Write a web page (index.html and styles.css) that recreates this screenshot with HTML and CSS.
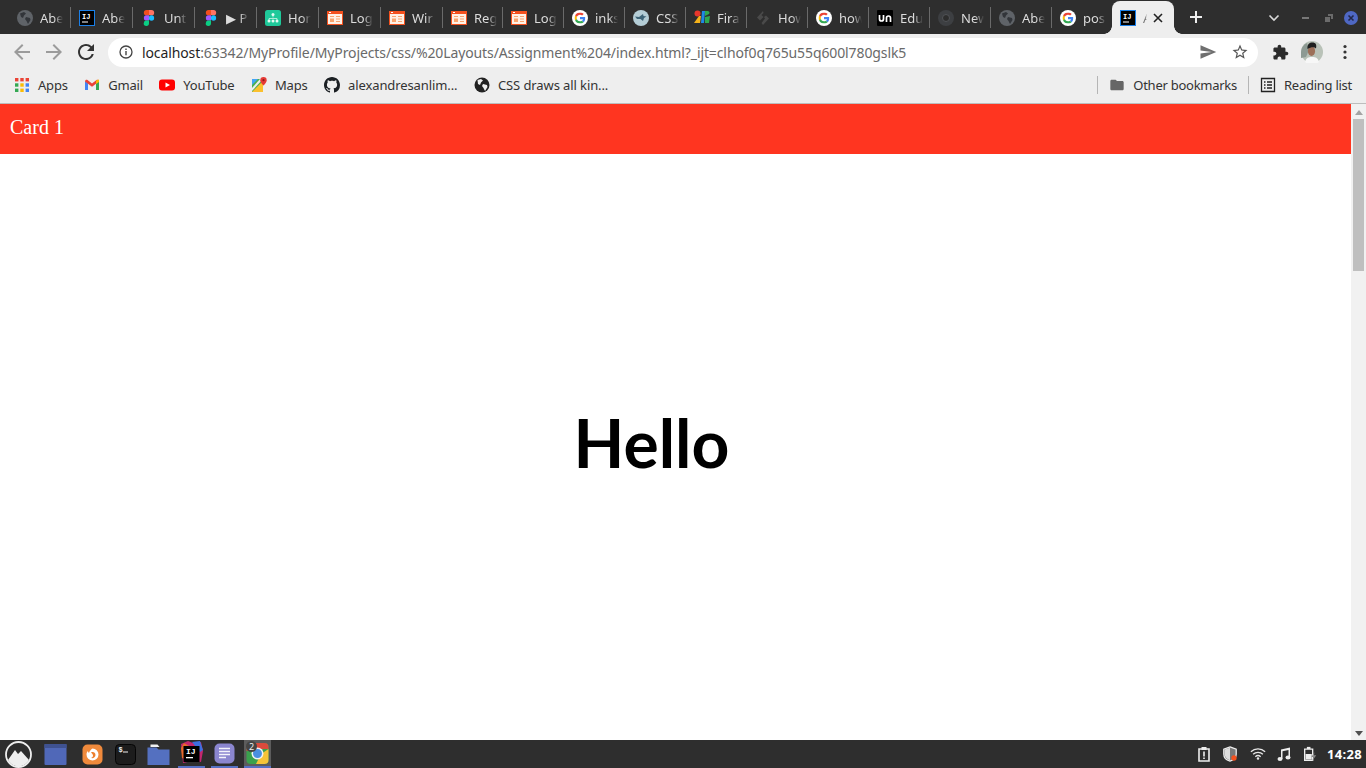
FILE: index.html
```html
<!DOCTYPE html>
<html lang="en">
<head>
    <meta charset="UTF-8">
    <meta name="viewport" content="width=device-width, initial-scale=1.0">
    <title>Card layout in browser</title>
    <link rel="stylesheet" href="styles.css">
</head>
<body>
    <!-- shared favicons -->
    <svg class="sprite" aria-hidden="true">
        <symbol id="globe" viewBox="0 0 16 16">
            <circle cx="8" cy="8" r="8" fill="#5f6368"/>
            <path d="M3 3.500 7 2l2 1.500-2 2-1 2.500-2-1zM9 7l4 1 .5 2-2.500 4-1.500-3-1.500-2z" fill="#32353a"/>
        </symbol>
        <symbol id="ij" viewBox="0 0 16 16">
            <rect x=".5" y=".5" width="15" height="15" fill="#000" stroke="#1a7fe8"/>
            <text x="3" y="8.500" class="ij-text">IJ</text>
            <rect x="3" y="11.500" width="6" height="1" fill="#fff"/>
        </symbol>
        <symbol id="figma" viewBox="0 0 16 16">
            <path d="M5.500 0H8v5.300H5.500a2.650 2.650 0 0 1 0-5.300z" fill="#f24e1e"/>
            <path d="M8 0h2.500a2.650 2.650 0 0 1 0 5.300H8z" fill="#ff7262"/>
            <path d="M5.500 5.300H8v5.300H5.500a2.650 2.650 0 0 1 0-5.300z" fill="#a259ff"/>
            <circle cx="10.500" cy="8" r="2.650" fill="#1abcfe"/>
            <path d="M5.500 10.600H8v2.700a2.650 2.650 0 1 1-2.500-2.700z" fill="#0acf83"/>
        </symbol>
        <symbol id="sheet" viewBox="0 0 16 16">
            <rect width="16" height="14" y="1" fill="#f4511e"/>
            <rect x="1" y="4" width="14" height="10" fill="#fff1e6"/>
            <rect x="2" y="2" width="2" height="1" fill="#fff"/>
            <path d="M3 6h4v1H3zM9 6h4v1H9zM9 8.500h4v1H9zM9 11h4v1H9zM3 8.500h4v3.500H3z" fill="#f9a56f"/>
        </symbol>
        <symbol id="google" viewBox="0 0 16 16">
            <circle cx="8" cy="8" r="8" fill="#fff"/>
            <svg x="2.500" y="2.500" width="11" height="11" viewBox="0 0 48 48">
                <path fill="#EA4335" d="M24 9.500c3.540 0 6.710 1.220 9.210 3.600l6.850-6.850C35.900 2.380 30.470 0 24 0 14.620 0 6.510 5.380 2.560 13.220l7.980 6.190C12.430 13.720 17.740 9.500 24 9.500z"/>
                <path fill="#4285F4" d="M46.980 24.550c0-1.570-.15-3.090-.38-4.550H24v9.020h12.940c-.58 2.960-2.260 5.480-4.780 7.180l7.730 6c4.510-4.180 7.090-10.360 7.090-17.650z"/>
                <path fill="#FBBC05" d="M10.530 28.590c-.5-1.450-.78-2.990-.78-4.590s.27-3.140.78-4.590l-7.980-6.190C.92 16.460 0 20.120 0 24c0 3.880.92 7.540 2.560 10.780l7.970-6.190z"/>
                <path fill="#34A853" d="M24 48c6.480 0 11.930-2.130 15.890-5.810l-7.730-6c-2.150 1.450-4.920 2.300-8.160 2.300-6.260 0-11.570-4.220-13.470-9.910l-7.980 6.190C6.510 42.620 14.620 48 24 48z"/>
            </svg>
        </symbol>
    </svg>

    <div class="tabstrip">
        <div class="tab"><svg class="favicon"><use href="#globe"/></svg><span class="tab-title">Abe</span></div>
        <div class="tab"><svg class="favicon"><use href="#ij"/></svg><span class="tab-title">Abe</span></div>
        <div class="tab"><svg class="favicon"><use href="#figma"/></svg><span class="tab-title">Unti</span></div>
        <div class="tab"><svg class="favicon"><use href="#figma"/></svg><span class="tab-title">▶ P</span></div>
        <div class="tab">
            <svg class="favicon" viewBox="0 0 16 16"><rect width="16" height="16" rx="2.500" fill="#1fc99a"/><path d="M8 4.500v3M4 11V8.500h8V11" fill="none" stroke="#cdf5e8" stroke-width=".8"/><circle cx="8" cy="4.500" r="1.500" fill="#e6fbf4"/><circle cx="4" cy="11" r="1.500" fill="#e6fbf4"/><circle cx="8" cy="11" r="1.500" fill="#e6fbf4"/><circle cx="12" cy="11" r="1.500" fill="#e6fbf4"/></svg>
            <span class="tab-title">Hon</span>
        </div>
        <div class="tab"><svg class="favicon"><use href="#sheet"/></svg><span class="tab-title">Log</span></div>
        <div class="tab"><svg class="favicon"><use href="#sheet"/></svg><span class="tab-title">Wir</span></div>
        <div class="tab"><svg class="favicon"><use href="#sheet"/></svg><span class="tab-title">Reg</span></div>
        <div class="tab"><svg class="favicon"><use href="#sheet"/></svg><span class="tab-title">Log</span></div>
        <div class="tab"><svg class="favicon"><use href="#google"/></svg><span class="tab-title">inks</span></div>
        <div class="tab">
            <svg class="favicon" viewBox="0 0 16 16"><circle cx="8" cy="8" r="8" fill="#b4cdd6"/><path d="M2 6.500 6 7l4-3 .5 2 3 .5-2.500 1.500L10 11 7.500 9 4 9z" fill="#3d6478"/></svg>
            <span class="tab-title">CSS</span>
        </div>
        <div class="tab">
            <svg class="favicon" viewBox="0 0 16 16"><circle cx="3.500" cy="3.500" r="3" fill="#e8372c"/><path d="M0 13 5 6h2l-1 7z" fill="#f5b21a"/><path d="M7 13 8 1h3l-1 12z" fill="#1e88e5"/><path d="M11 1h3a2 2 0 0 1 1 3l-4 2zM11 7l5-1-1 7h-4z" fill="#2fa84f"/></svg>
            <span class="tab-title">Fira</span>
        </div>
        <div class="tab">
            <svg class="favicon" viewBox="0 0 16 16"><path d="M8 1 2 7.500l3 3L8.500 7 6.500 5l2-2zM11 5.500l3 3L8 15l-1.500-2 3.500-4.500-1-1.500z" fill="#4a4a4a"/></svg>
            <span class="tab-title">How</span>
        </div>
        <div class="tab"><svg class="favicon"><use href="#google"/></svg><span class="tab-title">how</span></div>
        <div class="tab">
            <svg class="favicon" viewBox="0 0 16 16"><rect width="16" height="16" rx="1" fill="#000"/><path d="M2.500 5v4a2 2 0 0 0 4 0V5M9.500 12V8a2 2 0 0 1 4 0v4" fill="none" stroke="#fff" stroke-width="1.700"/></svg>
            <span class="tab-title">Edu</span>
        </div>
        <div class="tab">
            <svg class="favicon" viewBox="0 0 16 16"><circle cx="8" cy="8" r="8" fill="#3d3f42"/><circle cx="8" cy="8" r="3.500" fill="#2d2d2d" stroke="#515357"/></svg>
            <span class="tab-title">New</span>
        </div>
        <div class="tab"><svg class="favicon"><use href="#globe"/></svg><span class="tab-title">Abe</span></div>
        <div class="tab tab-last"><svg class="favicon"><use href="#google"/></svg><span class="tab-title">pos</span></div>
        <div class="tab tab-active">
            <svg class="favicon"><use href="#ij"/></svg>
            <span class="tab-title tab-title-short">A</span>
            <svg class="tab-close" viewBox="0 0 12 12"><path d="M2 2l8 8M10 2l-8 8" stroke="#222" stroke-width="1.600"/></svg>
        </div>
        <svg class="new-tab" viewBox="0 0 14 14"><path d="M7 1v12M1 7h12" stroke="#eee" stroke-width="2"/></svg>
        <div class="window-controls">
            <svg class="tab-search" viewBox="0 0 12 8"><path d="M1.500 1.500 6 6l4.500-4.500" fill="none" stroke="#d8d8d8" stroke-width="1.600"/></svg>
            <span class="win-min"></span>
            <svg class="win-restore" viewBox="0 0 8 8"><path d="M3 0h5v5H6V2H3zM0 3h5v5H0z" fill="#6b6b6b"/></svg>
            <svg class="win-close" viewBox="0 0 14 14"><circle cx="7" cy="7" r="7" fill="#4f68c4"/><path d="M4.500 4.500l5 5M9.500 4.500l-5 5" stroke="#23284a" stroke-width="1.600"/></svg>
        </div>
    </div>

    <div class="toolbar">
        <svg class="tool-icon tool-off" viewBox="0 0 24 24"><path d="M20 11H7.830l5.590-5.590L12 4l-8 8 8 8 1.410-1.410L7.830 13H20v-2z"/></svg>
        <svg class="tool-icon tool-off" viewBox="0 0 24 24"><path d="M12 4l-1.410 1.410L16.170 11H4v2h12.170l-5.580 5.590L12 20l8-8z"/></svg>
        <svg class="tool-icon" viewBox="0 0 24 24"><path d="M17.650 6.350A7.958 7.958 0 0012 4c-4.420 0-7.990 3.580-7.990 8s3.570 8 7.990 8c3.730 0 6.840-2.550 7.730-6h-2.080A5.990 5.990 0 0112 18c-3.310 0-6-2.690-6-6s2.690-6 6-6c1.660 0 3.140.69 4.220 1.780L13 11h7V4l-2.350 2.350z"/></svg>
        <div class="omnibox">
            <svg class="info-icon" viewBox="0 0 14 14"><circle cx="7" cy="7" r="6" fill="none" stroke="#444" stroke-width="1.300"/><path d="M6.300 6h1.400v4.200H6.300zM6.300 3.600h1.400V5H6.300z" fill="#444"/></svg>
            <span class="url"><span class="url-host">localhost</span>:63342/MyProfile/MyProjects/css/%20Layouts/Assignment%204/index.html?_ijt=clhof0q765u55q600l780gslk5</span>
            <svg class="omni-send" viewBox="0 0 24 24"><path d="M2.010 21 23 12 2.010 3 2 10l15 2-15 2z"/></svg>
            <svg class="omni-star" viewBox="0 0 24 24"><path d="M22 9.240l-7.190-.62L12 2 9.190 8.630 2 9.240l5.460 4.730L5.820 21 12 17.270 18.180 21l-1.630-7.030L22 9.240zM12 15.400l-3.760 2.270 1-4.280-3.320-2.880 4.380-.38L12 6.100l1.710 4.040 4.380.38-3.320 2.880 1 4.280L12 15.400z"/></svg>
        </div>
        <svg class="ext-icon" viewBox="0 0 24 24"><path d="M20.500 11H19V7c0-1.100-.9-2-2-2h-4V3.500C13 2.120 11.880 1 10.500 1S8 2.120 8 3.500V5H4c-1.100 0-1.990.9-1.990 2v3.800H3.500c1.490 0 2.700 1.210 2.700 2.700s-1.210 2.700-2.700 2.700H2V20c0 1.100.9 2 2 2h3.800v-1.500c0-1.490 1.210-2.700 2.700-2.700 1.490 0 2.700 1.210 2.700 2.700V22H17c1.100 0 2-.9 2-2v-4h1.500c1.380 0 2.500-1.120 2.500-2.500S21.880 11 20.500 11z"/></svg>
        <svg class="avatar" viewBox="0 0 22 22">
            <circle cx="11" cy="11" r="11" fill="#b9c2b8"/>
            <path d="M0 11a11 11 0 0 1 6-9l2 7-3 7-5 1z" fill="#8d9a93"/>
            <path d="M4 21c1-4 3-5 7-5s6 1 7 5a11 11 0 0 1-14 0z" fill="#f7f7f7"/>
            <ellipse cx="10.500" cy="10" rx="3.600" ry="5" fill="#9c6f58"/>
            <path d="M6.500 8C6 3 8.500 1.500 11.500 1.500S16 3.500 15 7.500c-2-2-5-1.500-8.500.5z" fill="#1f2020"/>
        </svg>
        <svg class="menu-icon" viewBox="0 0 4 16"><circle cx="2" cy="2.500" r="1.600"/><circle cx="2" cy="8" r="1.600"/><circle cx="2" cy="13.500" r="1.600"/></svg>
    </div>

    <div class="bookmarks">
        <div class="bookmark">
            <svg class="bm-icon" viewBox="0 0 16 16">
                <g fill="#ea4335"><rect x="1" y="1" width="3.400" height="3.400"/><rect x="6.300" y="1" width="3.400" height="3.400"/></g>
                <rect x="11.600" y="1" width="3.400" height="3.400" fill="#ea4335"/>
                <rect x="1" y="6.300" width="3.400" height="3.400" fill="#34a853"/><rect x="6.300" y="6.300" width="3.400" height="3.400" fill="#fbbc05"/><rect x="11.600" y="6.300" width="3.400" height="3.400" fill="#4285f4"/>
                <rect x="1" y="11.600" width="3.400" height="3.400" fill="#34a853"/><rect x="6.300" y="11.600" width="3.400" height="3.400" fill="#fbbc05"/><rect x="11.600" y="11.600" width="3.400" height="3.400" fill="#4285f4"/>
            </svg>
            <span>Apps</span>
        </div>
        <div class="bookmark">
            <svg class="bm-icon" viewBox="0 0 16 16">
                <path d="M1 13V4.500L8 9.500l7-5V13h-3V7.500L8 10.500 4 7.500V13z" fill="#e8eaed"/>
                <path d="M1 13V4l3 2.300V13z" fill="#4285f4"/><path d="M12 13V6.300L15 4v9z" fill="#34a853"/>
                <path d="M1 4.500C1 2.800 2.500 2.400 3.500 3L8 6.500 12.500 3c1-.6 2.500-.2 2.500 1.500L12 6.800 8 9.800 4 6.800z" fill="#ea4335"/>
                <path d="M12 3.400 15 2.500V5l-3 2z" fill="#fbbc05"/>
            </svg>
            <span>Gmail</span>
        </div>
        <div class="bookmark">
            <svg class="bm-icon" viewBox="0 0 16 16"><rect y="2.500" width="16" height="11" rx="3" fill="#f00"/><path d="M6.500 5.500v5L11 8z" fill="#fff"/></svg>
            <span>YouTube</span>
        </div>
        <div class="bookmark">
            <svg class="bm-icon" viewBox="0 0 16 16">
                <path d="M1 2h11v13H1z" fill="#4caf50"/><path d="M1 15 12 4v11z" fill="#fbc02d"/><path d="M1 11 9 2h3L1 14z" fill="#eee"/><path d="M1 2h6L1 8z" fill="#42a5f5"/>
                <path d="M12.500 0a3.200 3.200 0 0 1 3.200 3.200C15.700 5.500 12.500 8.500 12.500 8.500S9.300 5.500 9.300 3.200A3.200 3.200 0 0 1 12.500 0z" fill="#e53935"/><circle cx="12.500" cy="3.200" r="1.100" fill="#8e1c1c"/>
            </svg>
            <span>Maps</span>
        </div>
        <div class="bookmark bookmark-long">
            <svg class="bm-icon" viewBox="0 0 16 16"><path fill="#1b1f23" d="M8 0C3.580 0 0 3.580 0 8c0 3.540 2.290 6.530 5.470 7.590.4.070.55-.17.55-.38 0-.19-.01-.82-.01-1.490-2.010.37-2.530-.49-2.690-.94-.09-.23-.48-.94-.82-1.130-.28-.15-.68-.52-.01-.53.63-.01 1.080.58 1.230.82.72 1.210 1.870.87 2.330.66.070-.52.28-.87.51-1.070-1.780-.2-3.640-.89-3.640-3.950 0-.87.31-1.590.82-2.150-.08-.2-.36-1.020.08-2.120 0 0 .67-.21 2.200.82.64-.18 1.320-.27 2-.27.68 0 1.360.09 2 .27 1.530-1.040 2.200-.82 2.200-.82.44 1.100.16 1.920.08 2.120.51.56.82 1.270.82 2.150 0 3.070-1.870 3.750-3.650 3.950.29.25.54.73.54 1.480 0 1.070-.01 1.930-.01 2.200 0 .21.15.46.55.38A8.013 8.013 0 0016 8c0-4.420-3.580-8-8-8z"/></svg>
            <span>alexandresanlim...</span>
        </div>
        <div class="bookmark bookmark-long">
            <svg class="bm-icon" viewBox="0 0 16 16"><circle cx="8" cy="8" r="7.500" fill="#222"/><path d="M3.500 3 7 2l2 1.500-2 2-1 2.500-2-1zM9 7l4 1 .5 2-2.500 4-1.500-3-1.500-2z" fill="#f0f0f0"/></svg>
            <span>CSS draws all kin...</span>
        </div>
        <div class="bookmarks-right">
            <div class="bm-sep"></div>
            <div class="bookmark">
                <svg class="bm-icon" viewBox="0 0 24 24"><path fill="#666" d="M10 4H4c-1.100 0-1.990.9-1.990 2L2 18c0 1.100.9 2 2 2h16c1.100 0 2-.9 2-2V8c0-1.100-.9-2-2-2h-8l-2-2z"/></svg>
                <span>Other bookmarks</span>
            </div>
            <div class="bm-sep"></div>
            <div class="bookmark">
                <svg class="bm-icon" viewBox="0 0 16 16"><path d="M1.500 1.500h13v13h-13zM4 5h1.500M7 5h5M4 8h1.500M7 8h5M4 11h1.500M7 11h5" fill="none" stroke="#222" stroke-width="1.300"/></svg>
                <span>Reading list</span>
            </div>
        </div>
    </div>

    <div class="viewport">
        <div class="page">
            <div class="card-head">Card 1</div>
            <div class="card-body">
                <h1>Hello</h1>
            </div>
        </div>
        <div class="scrollbar">
            <div class="scroll-up"></div>
            <div class="scroll-thumb"></div>
            <div class="scroll-down"></div>
        </div>
    </div>

    <div class="dock">
        <svg class="dock-logo" viewBox="0 0 27 27"><circle cx="13.500" cy="13.500" r="12.500" fill="#2d2d2d" stroke="#eee" stroke-width="1.800"/><path d="M3 19 10 9l3 4 3-3 8 9a12 12 0 0 1-21 0z" fill="#eee"/></svg>
        <svg class="dock-icon dock-window" viewBox="0 0 27 27"><rect x="2.500" y="3" width="22" height="21" rx="1" fill="#5068b8"/><rect x="2.500" y="3" width="22" height="4" fill="#3f5291"/></svg>
        <svg class="dock-icon" viewBox="0 0 27 27"><rect x="3.500" y="3.500" width="20" height="20" rx="5" fill="#f08a3c"/><path d="M13.500 7.500a6 6 0 1 1-6 6c0-1.500.5-2.500 1.500-3.500 0 1 .5 1.500 1 2 .5-2 2-3.500 3.500-4.500z" fill="#fff"/><path d="M12 11.500c2-1 4.500 0 4.500 2.500s-2.500 3.500-4.500 3c1.500-.5 2-1.500 2-2.500s-1-2-2-3z" fill="#ee7f2c"/></svg>
        <svg class="dock-icon" viewBox="0 0 27 27"><rect x="3.500" y="3.500" width="20" height="20" rx="4" fill="#1c1c1c" stroke="#050505"/><text x="6.500" y="11" class="dock-term">$</text><rect x="11" y="10.500" width="5" height="1" fill="#eee"/></svg>
        <svg class="dock-icon" viewBox="0 0 27 27"><path d="M2.500 6.500h9l2 2h11V24h-22z" fill="#5470c0"/><path d="M5.500 3.500h7l2 2.500h-9z" fill="#f0f0f0"/></svg>
        <div class="dock-cell dock-open">
            <svg class="dock-icon" viewBox="0 0 27 27"><path d="M3 4 10 1l5 2 8-1 2 9-2 11-9-1-9 2z" fill="#c3276f"/><path d="M14 2l8-1 3 9-3 2z" fill="#3d6fe0"/><path d="M3 8l3-5 5 3-4 13-3-1z" fill="#e8692b"/><rect x="5.500" y="6" width="16" height="16" fill="#000"/><text x="8" y="14" class="dock-ij">IJ</text><rect x="8" y="17" width="7" height="1.300" fill="#fff"/></svg>
        </div>
        <div class="dock-cell dock-open">
            <svg class="dock-icon" viewBox="0 0 27 27"><rect x="3.500" y="3.500" width="20" height="20" rx="5" fill="#8b86cf"/><path d="M8 8.500h11M8 11.500h11M8 14.500h11M8 17.500h7" stroke="#f3f3fb" stroke-width="1.300"/></svg>
        </div>
        <div class="dock-cell dock-open dock-current">
            <svg class="dock-icon" viewBox="0 0 27 27"><rect x="2.500" y="3" width="22" height="21" rx="4" fill="#3aa14c"/><path d="M2.500 11V7a4 4 0 0 1 4-4h14a4 4 0 0 1 4 4v2H13z" fill="#da4a3c"/><path d="M24.500 9v11a4 4 0 0 1-4 4H12l5-10z" fill="#f6c338"/><circle cx="13.500" cy="13.500" r="6" fill="#f1f1f1"/><circle cx="13.500" cy="13.500" r="4.500" fill="#4a8fe0"/></svg>
            <span class="dock-badge">2</span>
        </div>
        <div class="tray">
            <svg class="tray-icon" viewBox="0 0 16 16"><path d="M3 3h10v12H3z" fill="none" stroke="#eee" stroke-width="1.600"/><rect x="5.500" y="1" width="5" height="3" fill="#eee"/><path d="M7.200 5.500h1.600v5H7.200zM7.200 11.500h1.600v1.600H7.200z" fill="#eee"/></svg>
            <svg class="tray-icon tray-shield" viewBox="0 0 18 18"><path d="M9 1l7 2.500V9c0 4-3 7-7 8-4-1-7-4-7-8V3.500z" fill="#777" stroke="#eee" stroke-width="1.400"/><path d="M9 2v14C5 15 3 12 3 9V4z" fill="#ddd"/><circle cx="13.500" cy="13.500" r="3" fill="#f4511e"/></svg>
            <svg class="tray-icon" viewBox="0 0 18 14"><path d="M1 4.500a11.500 11.500 0 0 1 16 0M3.500 7.300a8 8 0 0 1 11 0M6 10a4.500 4.500 0 0 1 6 0" fill="none" stroke="#e6e6e6" stroke-width="1.500"/><circle cx="9" cy="12" r="1.400" fill="#e6e6e6"/></svg>
            <svg class="tray-icon" viewBox="0 0 16 16"><path d="M5 3.500 14 1.500V11h-1.500V4L6.500 5.300V13H5z" fill="#eee"/><ellipse cx="4" cy="13" rx="2.500" ry="2" fill="#eee"/><ellipse cx="12" cy="11.500" rx="2.500" ry="2" fill="#eee"/></svg>
            <svg class="tray-icon" viewBox="0 0 16 18"><path d="M2 3.500h9V16H2z" fill="none" stroke="#eee" stroke-width="1.500"/><rect x="4.500" y="1" width="4" height="2.500" fill="#eee"/><path d="M3 9h7v6H3z" fill="#eee"/><path d="M13 7l-3.500 5.500h2.500L10.500 17 15 10.500h-2.500z" fill="#8a8a8a"/></svg>
            <span class="clock">14:28</span>
        </div>
    </div>
</body>
</html>
```

FILE: styles.css
```css
* {
    margin: 0;
    padding: 0;
    box-sizing: border-box;
}

html, body {
    height: 100%;
}

body {
    display: flex;
    flex-direction: column;
    overflow: hidden;
    font-family: "Noto Sans", sans-serif;
    font-size: 13px;
    background: #fff;
}

.sprite {
    display: none;
}

.ij-text {
    font: bold 7px "Liberation Mono", monospace;
    fill: #fff;
}

/* tabs */
.tabstrip {
    display: flex;
    align-items: stretch;
    height: 34px;
    padding: 1px 0 0 9px;
    background: #2e2e2e;
    flex-shrink: 0;
}

.tab {
    position: relative;
    display: flex;
    align-items: center;
    flex: 0 0 61px;
    padding-left: 8px;
    color: #dcdcdc;
}

.tab:nth-child(-n+7) {
    flex-basis: 62px;
}

.tab:nth-child(8),
.tab-last {
    flex-basis: 60px;
}

.tab::after {
    content: "";
    position: absolute;
    right: 0;
    top: 6px;
    height: 21px;
    width: 1px;
    background: #6a6a6a;
}

.tab-last::after,
.tab-active::after {
    display: none;
}

.favicon {
    width: 16px;
    height: 16px;
    flex-shrink: 0;
}

.tab-title {
    width: 23px;
    margin-left: 7px;
    overflow: hidden;
    white-space: nowrap;
    -webkit-mask-image: linear-gradient(to right, #000 60%, transparent 100%);
    mask-image: linear-gradient(to right, #000 60%, transparent 100%);
}

.tab-active {
    flex-basis: 62px;
    background: #eeeeee;
    border-radius: 8px 8px 0 0;
    color: #333;
}

.tab-active::before {
    content: "";
    position: absolute;
    left: -8px;
    right: -8px;
    bottom: 0;
    height: 8px;
    z-index: 0;
    background:
        radial-gradient(circle at 0 0, #2e2e2e 7.500px, #eeeeee 8px) left bottom / 8px 8px no-repeat,
        radial-gradient(circle at 100% 0, #2e2e2e 7.500px, #eeeeee 8px) right bottom / 8px 8px no-repeat;
}

.tab-title-short {
    width: 4px;
    color: #777;
}

.tab-close {
    width: 12px;
    height: 12px;
    margin-left: 5px;
    flex-shrink: 0;
}

.new-tab {
    width: 14px;
    height: 14px;
    margin: 9px 0 0 15px;
}

.window-controls {
    display: flex;
    align-items: center;
    margin-left: auto;
    padding-right: 8px;
}

.tab-search {
    width: 12px;
    height: 8px;
}

.win-min {
    width: 7px;
    height: 2px;
    margin-left: 22px;
    background: #777;
}

.win-restore {
    width: 8px;
    height: 8px;
    margin-left: 16px;
}

.win-close {
    width: 14px;
    height: 14px;
    margin-left: 11px;
}

/* toolbar */
.toolbar {
    display: flex;
    align-items: center;
    height: 36px;
    padding-left: 10px;
    background: #eeeeee;
    flex-shrink: 0;
}

.tool-icon {
    width: 24px;
    height: 24px;
    margin-right: 8px;
    fill: #333;
}

.tool-off {
    fill: #9b9b9b;
}

.omnibox {
    display: flex;
    align-items: center;
    width: 1150px;
    height: 29px;
    margin-left: 2px;
    padding: 0 9px 0 11px;
    background: #fff;
    border-radius: 15px;
    color: #6a6a6a;
}

.info-icon {
    width: 14px;
    height: 14px;
    flex-shrink: 0;
}

.url {
    margin-left: 9px;
    font-size: 14px;
    letter-spacing: -0.11px;
    white-space: nowrap;
}

.url-host {
    color: #1f1f1f;
}

.omni-send {
    width: 18px;
    height: 18px;
    margin-left: auto;
    fill: #6f6f6f;
}

.omni-star {
    width: 18px;
    height: 18px;
    margin-left: 14px;
    fill: #555;
}

.ext-icon {
    width: 17px;
    height: 17px;
    margin-left: 14px;
    fill: #2b2b2b;
}

.avatar {
    width: 22px;
    height: 22px;
    margin-left: 12px;
}

.menu-icon {
    width: 4px;
    height: 16px;
    margin-left: 20px;
    fill: #333;
}

/* bookmarks */
.bookmarks {
    display: flex;
    align-items: center;
    gap: 16.500px;
    height: 34px;
    padding: 0 14px 3px 14px;
    background: #eeeeee;
    border-bottom: 1px solid #bdbdbd;
    color: #333;
    letter-spacing: -0.2px;
    flex-shrink: 0;
}

.bookmark {
    display: flex;
    align-items: center;
    gap: 8px;
    white-space: nowrap;
}

.bookmark-long {
    letter-spacing: -0.1px;
}

.bm-icon {
    width: 16px;
    height: 16px;
    flex-shrink: 0;
}

.bookmarks-right {
    display: flex;
    align-items: center;
    gap: 11px;
    margin-left: auto;
    letter-spacing: -0.26px;
}

.bm-sep {
    width: 1px;
    height: 18px;
    background: #b5b5b5;
}

/* page */
.viewport {
    display: flex;
    flex: 1;
    min-height: 0;
}

.page {
    display: flex;
    flex-direction: column;
    flex: 1;
}

.card-head {
    height: 50px;
    padding: 12px 10px;
    background: #ff3520;
    color: #fff;
    font-family: "Liberation Serif", serif;
    font-size: 20px;
}

.card-body {
    display: flex;
    flex: 1;
    align-items: center;
    justify-content: center;
    padding: 0 48px 9px 0;
}

h1 {
    font-family: Lato, sans-serif;
    font-size: 66px;
    font-weight: 700;
    color: #000;
}

.scrollbar {
    display: flex;
    flex-direction: column;
    align-items: center;
    width: 15px;
    background: #f1f1f1;
}

.scroll-up {
    width: 0;
    height: 0;
    margin: 6px 0 4px;
    border: 4px solid transparent;
    border-top: 0;
    border-bottom: 5px solid #a3a3a3;
}

.scroll-thumb {
    width: 11px;
    height: 152px;
    background: #bfbfbf;
}

.scroll-down {
    width: 0;
    height: 0;
    margin-top: auto;
    margin-bottom: 4px;
    border: 4px solid transparent;
    border-bottom: 0;
    border-top: 5px solid #505050;
}

/* dock */
.dock {
    display: flex;
    align-items: center;
    height: 28px;
    padding-left: 5px;
    background: #2e2e2e;
    flex-shrink: 0;
}

.dock-logo {
    width: 27px;
    height: 27px;
    margin-right: 10px;
}

.dock-icon {
    display: block;
    width: 27px;
    height: 27px;
    margin-right: 6px;
}

.dock-window {
    margin-right: 10px;
}

.dock-term {
    font: bold 7px "Liberation Mono", monospace;
    fill: #eee;
}

.dock-ij {
    font: bold 8px "Liberation Mono", monospace;
    fill: #fff;
}

.dock-cell {
    position: relative;
    height: 28px;
    width: 27px;
    margin-right: 6px;
}

.dock-open {
    border-bottom: 2px solid #5570c4;
}

.dock-current {
    background: #5c5c5c;
}

.dock-badge {
    position: absolute;
    left: 2px;
    top: 1px;
    width: 11px;
    height: 11px;
    border-radius: 50%;
    background: #444;
    color: #eee;
    font-size: 9px;
    line-height: 11px;
    text-align: center;
}

.tray {
    display: flex;
    align-items: center;
    margin-left: auto;
    padding-right: 4px;
    color: #fff;
}

.tray-icon {
    width: 16px;
    height: 16px;
    margin-right: 10px;
}

.tray-shield {
    margin-right: 12px;
}

.clock {
    margin-left: -1px;
    font-size: 13px;
    font-weight: 700;
    letter-spacing: 0.3px;
}
```
